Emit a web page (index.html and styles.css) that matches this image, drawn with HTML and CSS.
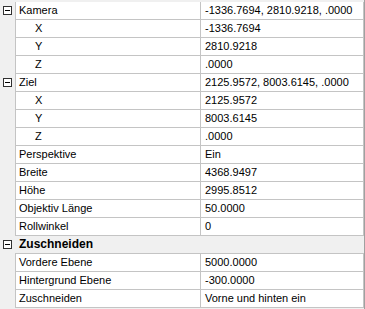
FILE: index.html
```html
<!DOCTYPE html>
<html lang="de">
<head>
  <meta charset="UTF-8" />
  <title>Eigenschaften</title>
  <link rel="stylesheet" href="styles.css">
</head>
<body>

  <div class="grid">
    <div class="row"><span class="gutter"><i class="toggle"></i></span><span class="name">Kamera</span><span class="value">-1336.7694, 2810.9218, .0000</span></div>
    <div class="row"><span class="gutter"></span><span class="name sub">X</span><span class="value">-1336.7694</span></div>
    <div class="row"><span class="gutter"></span><span class="name sub">Y</span><span class="value">2810.9218</span></div>
    <div class="row"><span class="gutter"></span><span class="name sub">Z</span><span class="value">.0000</span></div>
    <div class="row"><span class="gutter"><i class="toggle"></i></span><span class="name">Ziel</span><span class="value">2125.9572, 8003.6145, .0000</span></div>
    <div class="row"><span class="gutter"></span><span class="name sub">X</span><span class="value">2125.9572</span></div>
    <div class="row"><span class="gutter"></span><span class="name sub">Y</span><span class="value">8003.6145</span></div>
    <div class="row"><span class="gutter"></span><span class="name sub">Z</span><span class="value">.0000</span></div>
    <div class="row"><span class="gutter"></span><span class="name">Perspektive</span><span class="value">Ein</span></div>
    <div class="row"><span class="gutter"></span><span class="name">Breite</span><span class="value">4368.9497</span></div>
    <div class="row"><span class="gutter"></span><span class="name">Höhe</span><span class="value">2995.8512</span></div>
    <div class="row"><span class="gutter"></span><span class="name">Objektiv Länge</span><span class="value">50.0000</span></div>
    <div class="row"><span class="gutter"></span><span class="name">Rollwinkel</span><span class="value">0</span></div>
    <div class="row category"><span class="gutter"><i class="toggle"></i></span><span class="title">Zuschneiden</span></div>
    <div class="row"><span class="gutter"></span><span class="name">Vordere Ebene</span><span class="value">5000.0000</span></div>
    <div class="row"><span class="gutter"></span><span class="name">Hintergrund Ebene</span><span class="value">-300.0000</span></div>
    <div class="row"><span class="gutter"></span><span class="name">Zuschneiden</span><span class="value">Vorne und hinten ein</span></div>
  </div>

</body>
</html>
```

FILE: styles.css
```css
* {
  box-sizing: border-box;
}
body {
  margin: 0;
  background: #f0f0f0;
  font-family: 'Liberation Sans', Arial, sans-serif;
  font-size: 11px;
  color: #000;
}
.grid {
  width: 365px;
  height: 309px;
  padding-top: 2px;
  border-right: 1px solid #a0a0a0;
}
.row {
  display: flex;
  height: 18px;
  line-height: 17px;
}
.gutter {
  width: 15px;
  flex: none;
  position: relative;
}
.toggle {
  position: absolute;
  left: 3px;
  top: 4px;
  width: 9px;
  height: 9px;
  border: 1px solid #303030;
  background: #fff;
}
.toggle::after {
  content: "";
  position: absolute;
  left: 1px;
  top: 3px;
  width: 5px;
  height: 1px;
  background: #000;
}
.name,
.value {
  background: #fff;
  border-left: 1px solid #c4c4c4;
  border-bottom: 1px solid #c4c4c4;
  white-space: nowrap;
  overflow: hidden;
}
.name {
  width: 185px;
  padding-left: 3px;
}
.name.sub {
  padding-left: 19px;
}
.value {
  width: 164px;
  padding-left: 4px;
  border-right: 1px solid #c4c4c4;
}
.category .title {
  flex: 1;
  padding-left: 4px;
  font-weight: bold;
  font-size: 12px;
  border-bottom: 1px solid #c4c4c4;
}
```
